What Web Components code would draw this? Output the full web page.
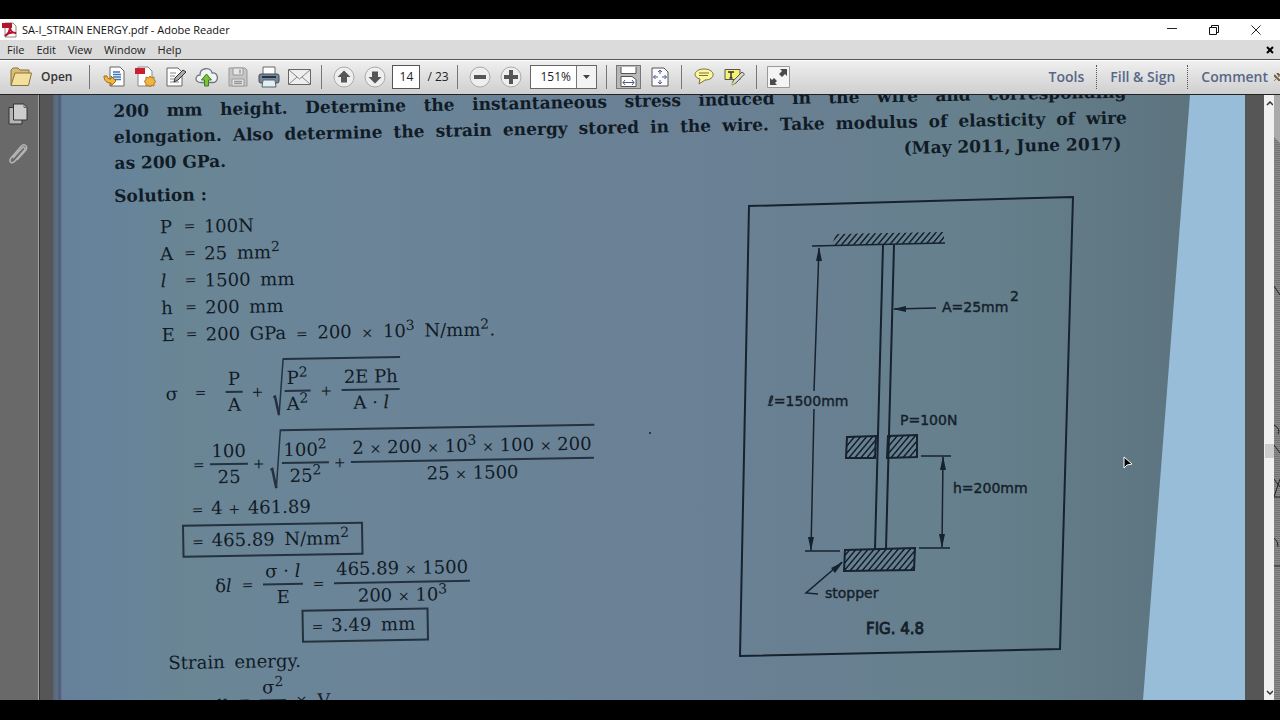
<!DOCTYPE html>
<html lang="en">
<head>
<meta charset="utf-8">
<title>SA-I_STRAIN ENERGY.pdf - Adobe Reader</title>
<style>
  html, body { margin: 0; height: 100%; background: #000; }
  body { font-family: "Open Sans", "Noto Sans", sans-serif; font-size: 11px; color: #222; }
</style>
</head>
<body>
<reader-app></reader-app>
<script>
function define(name, css, html) {
  const t = document.createElement('template');
  t.innerHTML = '<style>:host,*{box-sizing:border-box}' + css + '</style>' + html;
  customElements.define(name, class extends HTMLElement {
    constructor() {
      super();
      this.attachShadow({ mode: 'open' }).appendChild(t.content.cloneNode(true));
    }
  });
}

/* ---------- window chrome ---------- */
define('title-bar', `
  :host { display:flex; align-items:center; height:21px; background:#fff; color:#111; padding-left:2px; }
  .name { margin-left:4px; flex:1; white-space:nowrap; }
  button { width:42px; height:21px; border:0; padding:0; background:none; display:grid; place-items:center; }
  .controls { display:flex; margin-right:3px; }
  svg { display:block; }
`, `
  <svg width="16" height="16" viewBox="0 0 16 16"><path d="M3 1h8l3 3v11H3z" fill="#fff" stroke="#888"/><rect x="0" y="1" width="10" height="5" fill="#b5152b"/><path d="M3 14c3-2 5-6 5-9 0 4 3 6 6 6-4-1-8 0-11 3z" fill="none" stroke="#b5152b" stroke-width="2"/></svg>
  <span class="name">SA-I_STRAIN ENERGY.pdf - Adobe Reader</span>
  <div class="controls">
    <button aria-label="Minimize"><svg width="10" height="10"><path d="M0 3.500h10" stroke="#222"/></svg></button>
    <button aria-label="Restore"><svg width="10" height="10" fill="none" stroke="#111"><path d="M.5 2.5h7v7h-7zM2.500 2.500v-2h7v7h-2"/></svg></button>
    <button aria-label="Close"><svg width="10" height="10"><path d="M.5.500l9 9M9.500.500l-9 9" stroke="#222"/></svg></button>
  </div>
`);

define('menu-bar', `
  :host { display:flex; align-items:center; height:20px; background:#dcdbdb; border-bottom:1px solid #555; padding-left:1px; }
  nav { display:flex; flex:1; }
  button { border:0; background:none; padding:0 6px; font:inherit; color:#222; }
  .close { padding:0 6px 0 0; }
  svg { display:block; }
`, `
  <nav><button>File</button><button>Edit</button><button>View</button><button>Window</button><button>Help</button></nav>
  <button class="close" aria-label="Close document"><svg width="8" height="8"><path d="M1 1l6 6M7 1l-6 6" stroke="#000" stroke-width="2"/></svg></button>
`);

define('tool-button', `
  :host { display:block; }
  button { display:grid; place-items:center; width:31px; height:26px; border:0; padding:0; background:none; }
  :host([pressed]) button { width:25px; height:24px; margin:1px 3px; background:#b9b9b9; border:1px solid #777; }
  ::slotted(svg) { display:block; }
`, `<button><slot></slot></button>`);

define('tool-sep', `
  :host { display:block; width:1px; height:24px; margin:0 6px; background:#777; }
`, ``);

define('zoom-select', `
  :host { display:block; position:relative; width:67px; height:24px; margin:0 3px 0 4px; }
  select { appearance:none; width:100%; height:100%; border:1px solid #666; border-radius:0; background:linear-gradient(90deg,#fff 45px,#777 45px,#777 46px,#f3f3f3 46px); padding:0 0 0 9px; font:inherit; color:#222; }
  svg { position:absolute; right:7px; top:10px; pointer-events:none; }
`, `
  <select aria-label="Zoom"><option>151%</option></select>
  <svg width="7" height="4"><path d="M0 0h7L3.500 4z" fill="#444"/></svg>
`);

define('tool-bar', `
  :host { display:flex; align-items:center; height:35px; background:linear-gradient(#efefef,#cfcfcf); border-top:1px solid #fff; border-bottom:1px solid #222; padding:0 0 2px 9px; font-size:12px; overflow:hidden; white-space:nowrap; flex:none; }
  .open { display:flex; align-items:center; gap:8px; border:0; background:none; padding:0 11px 0 0; font:inherit; font-weight:600; color:#333; }
  tool-sep.first { margin-right:8px; }
  input { width:28px; height:24px; border:1px solid #555; border-radius:0; margin:0 7px 0 2px; padding:0; text-align:center; font:inherit; color:#222; background:#fff; }
  .pages { font-size:12px; width:24px; }
  .panes { display:flex; align-items:center; margin-left:auto; }
  .panes button { border:0; border-right:1px dotted #555; background:none; height:24px; padding:0 12px 0 13px; font:inherit; font-size:14px; font-weight:600; color:#566789; }
  .panes button:last-of-type { border:0; padding-right:6px; }
`, `
  <button class="open"><svg width="24" height="20" viewBox="0 0 24 20"><path d="M2 18V3l2-2h5l2 2h9v5" fill="#d9bd72" stroke="#8a733a"/><path d="M2 18.500L6 6h16.500l-3 12.500z" fill="#f3df9e" stroke="#8a733a"/></svg><span>Open</span></button>
  <tool-sep class="first"></tool-sep>
  <tool-button title="Convert"><svg width="22" height="22" viewBox="0 0 22 22"><path d="M7 1h10l4 4v15H7z" fill="#fdfdfd" stroke="#666"/><path d="M10 6h7M10 8.500h8M10 11h8M10 13.500h8" stroke="#3f77b5" stroke-width="1.500"/><path d="M1 10c0 5 3 7 7 7v3l5-5-5-5v3c-3 0-4-1-4-3z" fill="#f3b93c" stroke="#9a6a10"/></svg></tool-button>
  <tool-button title="Create PDF"><svg width="22" height="22" viewBox="0 0 22 22"><path d="M4 1h10l4 4v15H4z" fill="#fdfdfd" stroke="#888"/><rect x="1" y="2" width="10" height="6" fill="#c9202f"/><path d="M16 10l1.500 2 2.500-1v3l2 1.500-2 1.500v3l-2.500-1L16 21l-1.500-2-2.500 1v-3l-2-1.500 2-1.500v-3l2.500 1z" fill="#f0b544" stroke="#b07a1c"/></svg></tool-button>
  <tool-button title="Sign"><svg width="22" height="22" viewBox="0 0 22 22"><path d="M2 2h11l4 4v14H2z" fill="#fdfdfd" stroke="#666"/><path d="M5 7h6M5 10h5M5 13h4M5 16h9" stroke="#888"/><path d="M9 16l1-4 8-8 3 2-8 8z" fill="#aaa" stroke="#333"/></svg></tool-button>
  <tool-button title="Upload"><svg width="23" height="20" viewBox="0 0 23 20"><path d="M6 15.500C-1 15.500 0 8 5 8c0-8 11-8 12-2 7-1 7 9.500 1 9.500z" fill="#f2f4f4" stroke="#6b7a7a" stroke-width="1.300"/><path d="M11.500 7l5 6h-3v6h-4v-6h-3z" fill="#7cc142" stroke="#3f7d1a"/></svg></tool-button>
  <tool-button title="Save"><svg width="20" height="20" viewBox="0 0 20 20"><path d="M1 1h16l2 2v16H1z" fill="#c6c6c6" stroke="#999"/><path d="M5 1h10v7H5zM4 12h12v7H4z" fill="#e6e6e6" stroke="#999"/><path d="M12 2.500v4M6 14.500h8M6 16.500h8" stroke="#999" stroke-width="1.500"/></svg></tool-button>
  <tool-button title="Print"><svg width="22" height="22" viewBox="0 0 22 22"><path d="M5 1h12v8H5z" fill="#fff" stroke="#666"/><rect x="1" y="8" width="20" height="9" rx="2" fill="#77889a" stroke="#3c4a5a"/><path d="M4 11h14" stroke="#26323f" stroke-width="2"/><path d="M5 14h12l1 7H4z" fill="#e4eef6" stroke="#566"/></svg></tool-button>
  <tool-button title="Email"><svg width="23" height="16" viewBox="0 0 23 16"><path d="M.5.500h22v15H.5z" fill="#eee" stroke="#666"/><path d="M1 1l10.500 9L22 1M1 15l8-7M22 15l-8-7" fill="none" stroke="#888"/></svg></tool-button>
  <tool-sep></tool-sep>
  <tool-button title="Previous page"><svg width="22" height="22" viewBox="0 0 22 22"><circle cx="11" cy="11" r="10" fill="#eee" stroke="#aaa"/><path d="M11 4.500l6.500 6.500H14v5.500H8V11H4.500z" fill="#555"/></svg></tool-button>
  <tool-button title="Next page"><svg width="22" height="22" viewBox="0 0 22 22"><circle cx="11" cy="11" r="10" fill="#eee" stroke="#aaa"/><path d="M11 17.500L4.500 11H8V5.500h6V11h3.500z" fill="#555"/></svg></tool-button>
  <input type="text" value="14" aria-label="Page number"><span class="pages">/ 23</span>
  <tool-sep></tool-sep>
  <tool-button title="Zoom out"><svg width="22" height="22" viewBox="0 0 22 22"><circle cx="11" cy="11" r="10" fill="#eee" stroke="#aaa"/><path d="M5 9h12v4H5z" fill="#555"/></svg></tool-button>
  <tool-button title="Zoom in"><svg width="22" height="22" viewBox="0 0 22 22"><circle cx="11" cy="11" r="10" fill="#eee" stroke="#aaa"/><path d="M9 4h4v5h5v4h-5v5H9v-5H4V9h5z" fill="#555"/></svg></tool-button>
  <zoom-select></zoom-select>
  <tool-sep></tool-sep>
  <tool-button pressed title="Fit width"><svg width="17" height="20" viewBox="0 0 17 20"><path d="M1 0v6.500h15V0" fill="#fff" stroke="#555"/><path d="M1 19.500v-10h11l4 3v7z" fill="#fff" stroke="#555"/><path d="M3 15.500h11M5 13l-2 2.500L5 18M12 13l2 2.500-2 2.500" fill="none" stroke="#4a5b8c"/></svg></tool-button>
  <tool-button title="Fit page"><svg width="18" height="20" viewBox="0 0 18 20"><path d="M1 1h12l4 4v14H1z" fill="#fafafa" stroke="#555"/><path d="M9 3v4M9 13v4M2.500 10H7M11 10h4.500M7 5l2-2 2 2M7 15l2 2 2-2M4.500 8l-2 2 2 2M13.500 8l2 2-2 2" fill="none" stroke="#4a5b8c"/></svg></tool-button>
  <tool-sep></tool-sep>
  <tool-button title="Add note"><svg width="20" height="17" viewBox="0 0 20 17"><path d="M10 1c12 0 12 11 1 11l-6 4 1-5C-2 9 0 1 10 1z" fill="#fbf6a0" stroke="#77723c"/><path d="M5 5h10M5 7.500h9" stroke="#77723c"/></svg></tool-button>
  <tool-button title="Highlight text"><svg width="21" height="18" viewBox="0 0 21 18"><path d="M1 1.500h15v10H1z" fill="#f7f072" stroke="#555"/><path d="M4 4h6M7 4v6M5.500 10h3" stroke="#333" stroke-width="1.500"/><path d="M8 17l1-4 9-9 2.500 2L12 15z" fill="#d8d8d0" stroke="#555"/><path d="M7 17l2-3 2 2z" fill="#cde04b"/></svg></tool-button>
  <tool-sep></tool-sep>
  <tool-button title="Read mode"><svg width="23" height="22" viewBox="0 0 23 22"><path d="M.5.500h22v21H.5z" fill="#f4f4f4" stroke="#999"/><path d="M13 3h7v7l-2-2-3 3-3-3 3-3zM3 19v-7l2 2 2-2 3 3-2 2 2 2z" fill="#4a4a4a"/></svg></tool-button>
  <div class="panes"><button>Tools</button><button>Fill &amp; Sign</button><button>Comment</button>
  <svg width="6" height="8"><path d="M0 2l6 6M3 0l3 3" stroke="#7a5a3a" stroke-width="2"/><path d="M0 8l6-6" stroke="#6d8a5c"/></svg></div>
`);

define('side-rail', `
  :host { display:flex; flex-direction:column; align-items:center; gap:18px; width:40px; padding:8px 4px 0 0; background:#696969; border-right:1px solid #333; box-shadow:inset -1px 0 #a5a5a5; flex:none; }
  button { border:0; padding:0; background:none; display:block; }
  svg { display:block; }
`, `
  <button aria-label="Page thumbnails"><svg width="20" height="22" viewBox="0 0 20 22"><path d="M1 4.500h13V21H1z" fill="#b5b5b5" stroke="#333"/><path d="M5.500 1H16l3 3.500V17H5.500z" fill="#cdcdcd" stroke="#333"/><path d="M16 1v3.500h3" fill="none" stroke="#666"/></svg></button>
  <button aria-label="Attachments"><svg width="20" height="22" viewBox="0 0 20 22"><path d="M5 15l9-10c2-2 4 0 2.500 2L7 18c-3 3.500-7 1-4-3L13 3.500c3-3.500 8-.5 4.500 4L9 17" fill="none" stroke="#b5b5b5" stroke-width="1.500"/></svg></button>
`);

define('scroll-rail', `
  :host { display:flex; flex-direction:column; align-items:center; width:10px; background:#f0f0f0; flex:none; }
  .above { flex:350 0 0; padding-top:6px; } .thumb { flex:none; width:9px; height:14px; background:#cdcdcd; align-self:flex-end; }
  .below { flex:241 0 0; display:flex; align-items:flex-end; padding-bottom:5px; }
  svg { display:block; }
`, `
  <div class="above"><svg width="7" height="5"><path d="M1 4l3-3 3 3" fill="none" stroke="#333" stroke-width="1.500"/></svg></div>
  <div class="thumb"></div>
  <div class="below"><svg width="7" height="5"><path d="M1 1l3 3 3-3" fill="none" stroke="#333" stroke-width="1.500"/></svg></div>
`);

define('desktop-edge', `
  :host { display:block; width:6px; flex:none; overflow:hidden; background:repeating-linear-gradient(#8b8b8b 0 1px,#747474 1px 2px); }
  svg { display:block; }
`, `<svg width="6" height="605" fill="none" stroke="#222"><path d="M0 0h6v48L0 42z" fill="#aaa" stroke="none"/><path d="M0 191l6 9M0 330q7 4 4 9M0 350l6 8M0 384l6 8M6 384l-6 18h6M0 443q5 4 4 9M0 471h6"/></svg>`);

/* ---------- formula parts ---------- */
define('math-frac', `
  :host { display:inline-flex; flex-direction:column; align-items:stretch; text-align:center; line-height:24px; }
  .num { border-bottom:2px solid #24323f; padding:0 2px; }
  .den { padding:0 2px; min-height:24px; }
`, `<div class="num"><slot name="num"></slot></div><div class="den"><slot></slot></div>`);

define('math-root', `
  :host { display:inline-flex; align-items:stretch; }
  svg { width:12px; height:auto; display:block; margin-right:-1px; }
  .body { display:flex; align-items:center; gap:var(--root-gap,5px); border-top:2px solid #24323f; padding:6px 1px 0 1px; }
`, `<svg viewBox="0 0 12 56" preserveAspectRatio="none" fill="none" stroke="#24323f"><path d="M0 38l3-2" /><path d="M2 36l4 19" stroke-width="2.500"/><path d="M6 55l5-54h1" stroke-width="1.500"/></svg><div class="body"><slot></slot></div>`);

/* ---------- scanned page ---------- */
define('problem-text', `
  :host { display:block; font-weight:700; font-size:17px; line-height:26px; transform:rotate(-1.1deg); transform-origin:0 50%; white-space:nowrap; }
  p { margin:0; text-align:justify; text-align-last:justify; }
  .last { display:flex; justify-content:space-between; padding-right:6px; }
`, `
  <p>200 mm height. Determine the instantaneous stress induced in the wire and corresponding</p>
  <p>elongation. Also determine the strain energy stored in the wire. Take modulus of elasticity of wire</p>
  <p class="last"><span>as 200 GPa.</span><span>(May 2011, June 2017)</span></p>
`);

define('solution-steps', `
  :host { display:block; font-size:18px; transform:rotate(-1deg); transform-origin:0 0; white-space:nowrap; }
  h2 { margin:0 0 4px; font-size:17px; line-height:27px; }
  dl { margin:0 0 6px 45px; display:grid; grid-template-columns:24px 20px auto; line-height:27px; justify-content:start; }
  dt, dd { margin:0; display:contents; }
  sup { font-size:14px; line-height:0; }
  .op { font-size:14px; }
  .unit { margin-left:4px; }
  .spaced { margin:0 4px; }
  .eq { display:flex; align-items:center; gap:5px; margin:0 0 2px 74px; min-height:66px; }
  .eq.first { margin:0 0 6px 48px; gap:9px; --root-gap:10px; }
  .eq.first .lhs { width:20px; }
  .eq.first .wide { width:22px; }
  .rooted > :not(math-root) { padding-top:8px; }
  .eq.delta { margin:0 0 0 94px; min-height:52px; gap:10px; }
  .line { margin:0 0 2px 72px; line-height:26px; }
  .line .op, .box .op { margin-right:2px; }
  .box { display:table; border:2px solid #24323f; line-height:28px; padding:0 12px 0 8px; margin:0 0 2px 62px; }
  .box.small { margin:0 0 4px 180px; }
  .strain { margin:0 0 0 46px; line-height:27px; }
`, `
  <h2>Solution :</h2>
  <dl>
    <dt><span>P</span></dt><dd><span class="op">=</span><span>100N</span></dd>
    <dt><span>A</span></dt><dd><span class="op">=</span><span>25 <span class="unit">mm<sup>2</sup></span></span></dd>
    <dt><i>l</i></dt><dd><span class="op">=</span><span>1500 <span class="unit">mm</span></span></dd>
    <dt><span>h</span></dt><dd><span class="op">=</span><span>200 <span class="unit">mm</span></span></dd>
    <dt><span>E</span></dt><dd><span class="op">=</span><span>200 <span class="unit">GPa</span> <span class="op spaced">=</span> 200 <span class="op spaced">×</span> 10<sup>3</sup> <span class="unit">N/mm<sup>2</sup>.</span></span></dd>
  </dl>
  <div class="eq first rooted"><span class="lhs">σ</span><span class="op wide">=</span>
    <math-frac><span slot="num">P</span>A</math-frac><span class="op">+</span>
    <math-root><math-frac><span slot="num">P<sup>2</sup></span>A<sup>2</sup></math-frac><span class="op">+</span><math-frac><span slot="num">2E Ph</span>A · <i>l</i></math-frac></math-root></div>
  <div class="eq rooted"><span class="op">=</span>
    <math-frac><span slot="num">100</span>25</math-frac><span class="op">+</span>
    <math-root><math-frac><span slot="num">100<sup>2</sup></span>25<sup>2</sup></math-frac><span class="op">+</span><math-frac><span slot="num">2 <span class="op">×</span> 200 <span class="op">×</span> 10<sup>3</sup> <span class="op">×</span> 100 <span class="op">×</span> 200</span>25 <span class="op">×</span> 1500</math-frac></math-root></div>
  <div class="line"><span class="op">=</span> 4 <span class="op">+</span> 461.89</div>
  <div class="box"><span class="op">=</span> 465.89 <span class="unit">N/mm<sup>2</sup></span></div>
  <div class="eq delta"><span>δ<i>l</i></span><span class="op">=</span><math-frac><span slot="num">σ · <i>l</i></span>E</math-frac><span class="op">=</span>
    <math-frac><span slot="num">465.89 <span class="op">×</span> 1500</span>200 <span class="op">×</span> 10<sup>3</sup></math-frac></div>
  <div class="box small"><span class="op">=</span> 3.49 <span class="unit">mm</span></div>
  <p class="strain">Strain <span class="unit">energy.</span></p>
  <div class="eq delta"><span>u</span><span class="op">=</span><math-frac><span slot="num">σ<sup>2</sup></span></math-frac><span class="op">×</span><span>V</span></div>
`);

define('figure-drawing', `
  :host { display:block; }
  svg { display:block; overflow:visible; }
  text { font-family:"DejaVu Sans", sans-serif; font-size:14px; fill:#15202b; stroke:#15202b; stroke-width:.4; }
  .caption { font-size:15px; stroke-width:.8; }
`, `
  <svg width="342" height="468" viewBox="736 192 342 468" fill="none" stroke="#16222e" stroke-width="1.500" role="img" aria-label="Bar with falling weight">
    <defs><pattern id="hatch" width="6" height="8" patternUnits="userSpaceOnUse" patternTransform="skewX(-40)"><path d="M3 0v8" stroke="#16222e" stroke-width="2"/></pattern></defs>
    <path d="M749 206L1073 197L1060 649L740 656z" stroke-width="2"/>
    <path d="M836 234L944 232V243L832 245z" fill="url(#hatch)" stroke="none"/>
    <path d="M812 246L945 243"/>
    <path d="M883 245L875 549M894 245L886 549" stroke-width="2"/>
    <path d="M819 248L814 391M814 409L811 550M805 551L840 551"/>
    <path d="M819 247l-3 14h6zM811 551l-3-14h6z" fill="#16222e" stroke="none"/>
    <path d="M936 308L894 309"/><path d="M893 309l13-3v6z" fill="#16222e" stroke="none"/>
    <path d="M847 437L876 436L875 458L846 458zM888 436L917 435L917 457L887 458z" fill="url(#hatch)" stroke-width="2"/>
    <path d="M921 456L951 456M943 457L942 547M919 548L950 548"/>
    <path d="M943 456l-3 14h6zM942 548l-3-14h6z" fill="#16222e" stroke="none"/>
    <path d="M845 550L915 548L914 570L844 571z" fill="url(#hatch)" stroke-width="2"/>
    <path d="M842 562L806 593L818 594"/><path d="M843 562l-12 6 4 5z" fill="#16222e" stroke="none"/>
    <text x="942" y="312">A=25mm</text><text x="1010" y="301">2</text>
    <text x="768" y="406">ℓ=1500mm</text>
    <text x="900" y="425">P=100N</text>
    <text x="953" y="493">h=200mm</text>
    <text x="825" y="598">stopper</text>
    <text class="caption" x="866" y="634">FIG. 4.8</text>
    <path d="M649 433h2" />
  </svg>
`);

define('scan-page', `
  :host { display:block; flex:1; min-width:0; overflow:hidden; margin:0 19px 0 13px; background:#97bdd8; }
  .paper { height:100%; margin-right:55px; padding:3px 63px 0 61px; overflow:hidden;
    clip-path:polygon(0 0,100% 0,calc(100% - 47px) 100%,0 100%);
    background:linear-gradient(90deg,#566577 0,#5c7083 4px,#4f5878 7px,#66809a 9px,#67849a 80px,transparent 130px),linear-gradient(90deg,#68868f 0,#6b8598 20%,#6a8094 60%,#65808c 82%,#5d747f 100%);
    font-family:"DejaVu Serif", serif; color:#111b26; }
  .columns { display:grid; grid-template-columns:622fr 391fr; margin-top:7px; }
  figure-drawing { margin-top:9px; }
`, `
  <div class="paper"><problem-text></problem-text>
  <div class="columns"><solution-steps></solution-steps><figure-drawing></figure-drawing></div></div>
`);

define('reader-app', `
  :host { display:flex; flex-direction:column; height:100vh; padding:19px 0 20px; background:#000; }
  title-bar, menu-bar { flex:none; }
  .view { display:flex; flex:1; min-height:0; background:#565656; overflow:hidden; }
  .cursor { position:absolute; right:147px; top:456px; }
`, `
  <title-bar></title-bar><menu-bar></menu-bar><tool-bar></tool-bar>
  <div class="view"><side-rail></side-rail><scan-page></scan-page><scroll-rail></scroll-rail><desktop-edge></desktop-edge></div>
  <svg class="cursor" width="10" height="13"><path d="M1 1v11l3-3 5-1z" fill="#000" stroke="#fff"/></svg>
`);
</script>
</body>
</html>
